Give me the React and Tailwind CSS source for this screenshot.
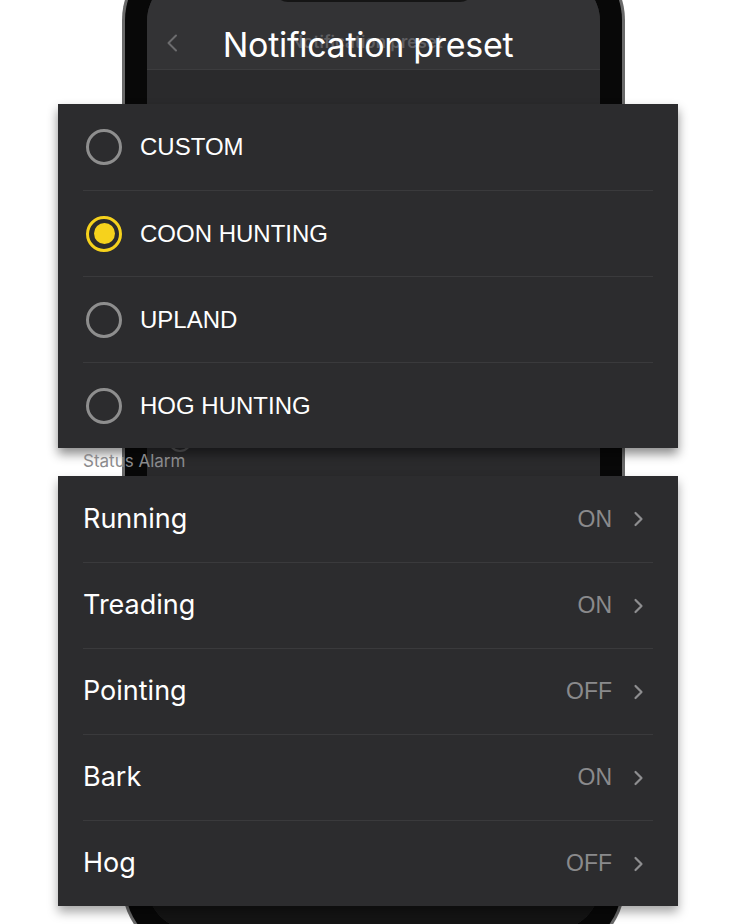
import { Fragment } from 'react';

const presets = [
  { label: 'CUSTOM', selected: false },
  { label: 'COON HUNTING', selected: true },
  { label: 'UPLAND', selected: false },
  { label: 'HOG HUNTING', selected: false },
];

const alarms = [
  { label: 'Running', value: 'ON' },
  { label: 'Treading', value: 'ON' },
  { label: 'Pointing', value: 'OFF' },
  { label: 'Bark', value: 'ON' },
  { label: 'Hog', value: 'OFF' },
];

const Radio = ({ selected }) =>
  selected ? (
    <div className="w-[36px] h-[36px] rounded-full border-[3.5px] border-[#f6d21c] flex items-center justify-center shrink-0">
      <div className="w-[21px] h-[21px] rounded-full bg-[#f6d21c]" />
    </div>
  ) : (
    <div className="w-[36px] h-[36px] rounded-full border-[3px] border-[#8e8e8e] shrink-0" />
  );

const Chevron = () => (
  <svg width="11" height="16" viewBox="0 0 11 16" fill="none" className="shrink-0">
    <path d="M2.5 2 L8.5 8 L2.5 14" stroke="#8e8e90" strokeWidth="2.2" strokeLinecap="round" strokeLinejoin="round" />
  </svg>
);

// phone mockup sitting behind the cards
const Phone = () => (
  <div className="absolute left-[122px] top-[-50px] w-[503px] h-[1005px] rounded-[70px] bg-[#6a6a6a] p-[3px]">
    <div className="w-full h-full rounded-[67px] bg-[#080808] p-[22px]">
      <div className="relative w-full h-full rounded-[46px] overflow-hidden flex flex-col bg-[#2a2a2c]">
        <div className="absolute top-0 left-1/2 -translate-x-1/2 w-[200px] h-[27px] rounded-b-[14px] bg-[#151515]" />
        <div className="h-[95px] bg-[#333335] border-b border-[#3c3c3e] flex items-end pb-[14px]">
          <div className="relative w-full h-[24px] flex items-center justify-center">
            <svg width="12" height="18" viewBox="0 0 12 18" fill="none" className="absolute left-[19px] top-[3px]">
              <path d="M10 1.5 L2.5 9 L10 16.5" stroke="#6c6c6e" strokeWidth="2" strokeLinecap="round" strokeLinejoin="round" />
            </svg>
            <span className="font-['Inter',sans-serif] text-[17px] font-semibold text-[#5e5e61] -ml-[14px]">
              Notification preset
            </span>
          </div>
        </div>
        <div className="flex-1 relative">
          <div className="absolute left-[21px] top-[358px] w-[24px] h-[24px] rounded-full border-2 border-[#5a5a5c]" />
        </div>
        <div className="h-[40px] bg-[#141414]" />
      </div>
    </div>
  </div>
);

export default function App() {
  return (
    <div className="relative w-[736px] h-[924px] overflow-hidden bg-white">
      <Phone />
      <div className="relative flex flex-col">
        <div className="h-[88px] flex items-center justify-center">
          <h1 className="font-['Inter',sans-serif] text-[34px] font-normal text-white tracking-[-0.3px]">
            Notification preset
          </h1>
        </div>

        <div className="mt-[16px] mx-[58px] bg-[#2c2c2e] shadow-[0_6px_10px_rgba(0,0,0,0.45)]">
          {presets.map((p, i) => (
            <Fragment key={p.label}>
              {i > 0 && <div className="mx-[25px] h-px bg-[#3a3a3c]" />}
              <div className={`${i === 0 ? 'h-[86px]' : 'h-[85px]'} flex items-center pl-[28px] gap-[18px]`}>
                <Radio selected={p.selected} />
                <span className="font-['Liberation_Sans',sans-serif] text-[24px] text-white">{p.label}</span>
              </div>
            </Fragment>
          ))}
        </div>

        <div className="h-[28px] flex items-center pl-[83px]">
          <span className="font-['Inter',sans-serif] text-[17px] text-[#8a8a8c]">Status Alarm</span>
        </div>

        <div className="mx-[58px] bg-[#2c2c2e] shadow-[0_6px_10px_rgba(0,0,0,0.35)]">
          {alarms.map((a, i) => (
            <Fragment key={a.label}>
              {i > 0 && <div className="mx-[25px] h-px bg-[#3a3a3c]" />}
              <div className={`${i === 0 ? 'h-[86px]' : 'h-[85px]'} flex items-center pl-[25px] pr-[34px]`}>
                <span className="flex-1 font-['Inter',sans-serif] text-[27px] text-white">{a.label}</span>
                <span className="font-['Liberation_Sans',sans-serif] text-[23px] text-[#8a8a8c] mr-[21px]">{a.value}</span>
                <Chevron />
              </div>
            </Fragment>
          ))}
        </div>
      </div>
    </div>
  );
}
